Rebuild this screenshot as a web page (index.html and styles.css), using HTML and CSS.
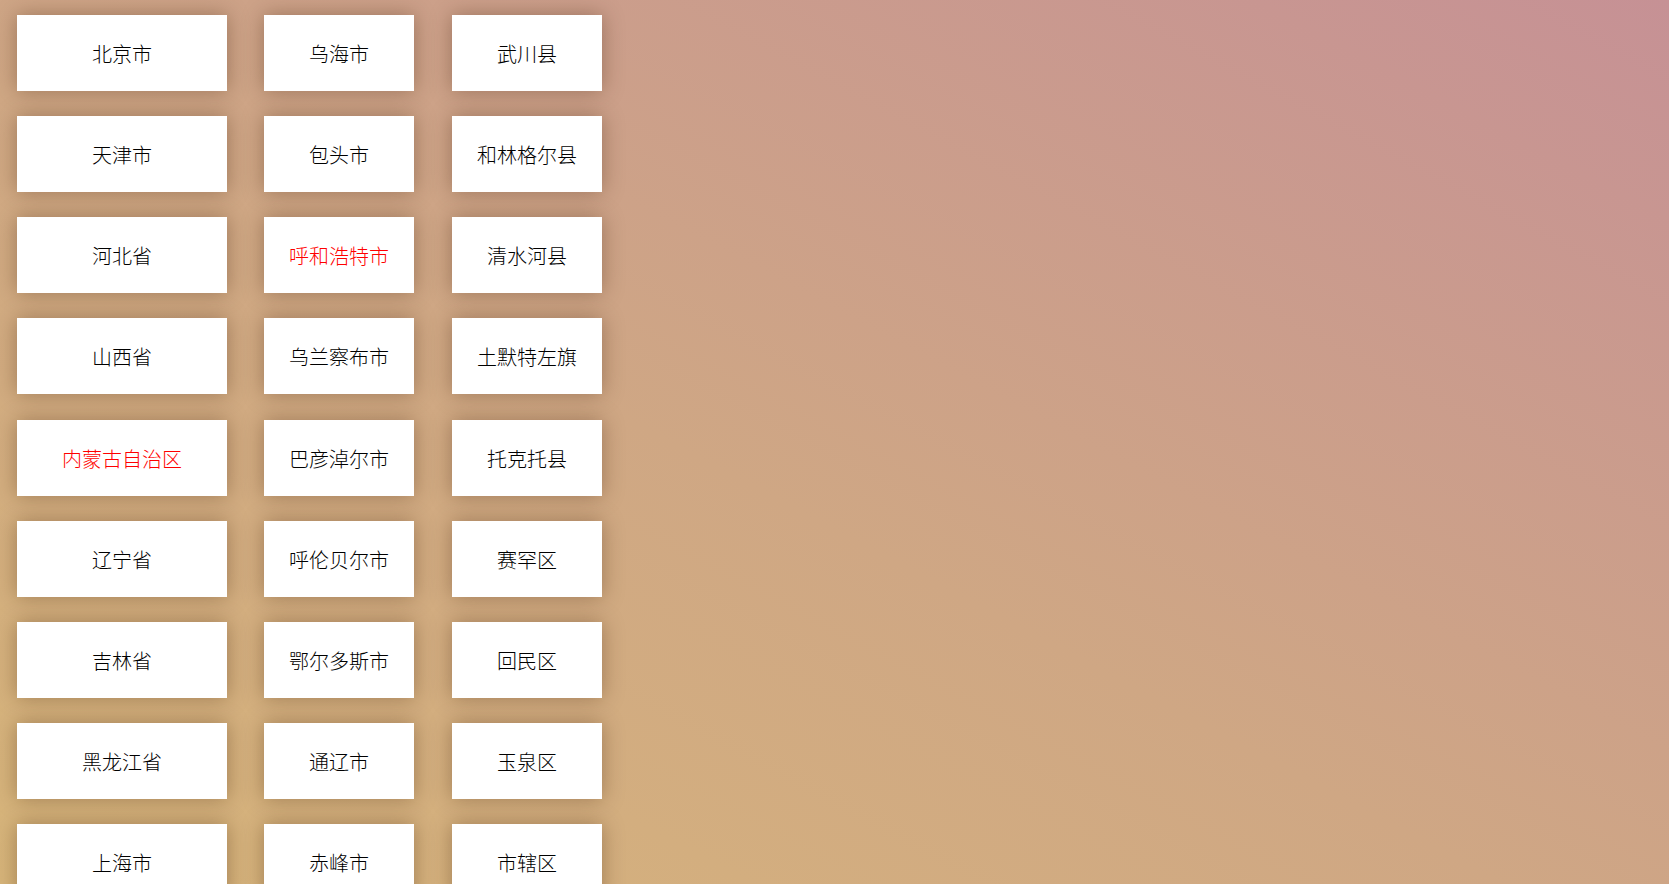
FILE: index.html
```html
<!DOCTYPE html>
<html lang="zh-CN">
<head>
<meta charset="utf-8">
<title>省市区选择</title>
<link rel="stylesheet" href="styles.css">
</head>
<body>
<div class="picker">
  <ul class="col col-province">
    <li class="item">北京市</li>
    <li class="item">天津市</li>
    <li class="item">河北省</li>
    <li class="item">山西省</li>
    <li class="item active">内蒙古自治区</li>
    <li class="item">辽宁省</li>
    <li class="item">吉林省</li>
    <li class="item">黑龙江省</li>
    <li class="item">上海市</li>
  </ul>
  <ul class="col col-city">
    <li class="item">乌海市</li>
    <li class="item">包头市</li>
    <li class="item active">呼和浩特市</li>
    <li class="item">乌兰察布市</li>
    <li class="item">巴彦淖尔市</li>
    <li class="item">呼伦贝尔市</li>
    <li class="item">鄂尔多斯市</li>
    <li class="item">通辽市</li>
    <li class="item">赤峰市</li>
  </ul>
  <ul class="col col-area">
    <li class="item">武川县</li>
    <li class="item">和林格尔县</li>
    <li class="item">清水河县</li>
    <li class="item">土默特左旗</li>
    <li class="item">托克托县</li>
    <li class="item">赛罕区</li>
    <li class="item">回民区</li>
    <li class="item">玉泉区</li>
    <li class="item">市辖区</li>
  </ul>
</div>
</body>
</html>
```
FILE: styles.css
```css
html {
  min-height: 100%;
  background: linear-gradient(to top right, #d7b57a 0%, #cfa784 45%, #c69195 100%) fixed;
}
body {
  margin: 0;
  font-family: "Noto Sans CJK SC", "Noto Sans", sans-serif;
  color: #000;
}
.picker {
  display: flex;
  align-items: flex-start;
  gap: 37px;
  padding: 15px 0 0 17px;
}
.col {
  list-style: none;
  margin: 0;
  padding: 0;
  display: flex;
  flex-direction: column;
  gap: 25.125px;
}
.col-province { width: 210px; }
.col-city { width: 150px; }
.col-area { width: 150px; margin-left: 1px; }
.item {
  height: 76px;
  display: flex;
  align-items: center;
  justify-content: center;
  background: #fff;
  font-size: 20px;
  font-weight: 300;
  line-height: 1;
  padding-top: 2px;
  box-sizing: border-box;
  box-shadow: 0 0 20px rgba(60, 30, 10, 0.35);
  white-space: nowrap;
}
.item.active {
  color: #ff0000;
}
```
